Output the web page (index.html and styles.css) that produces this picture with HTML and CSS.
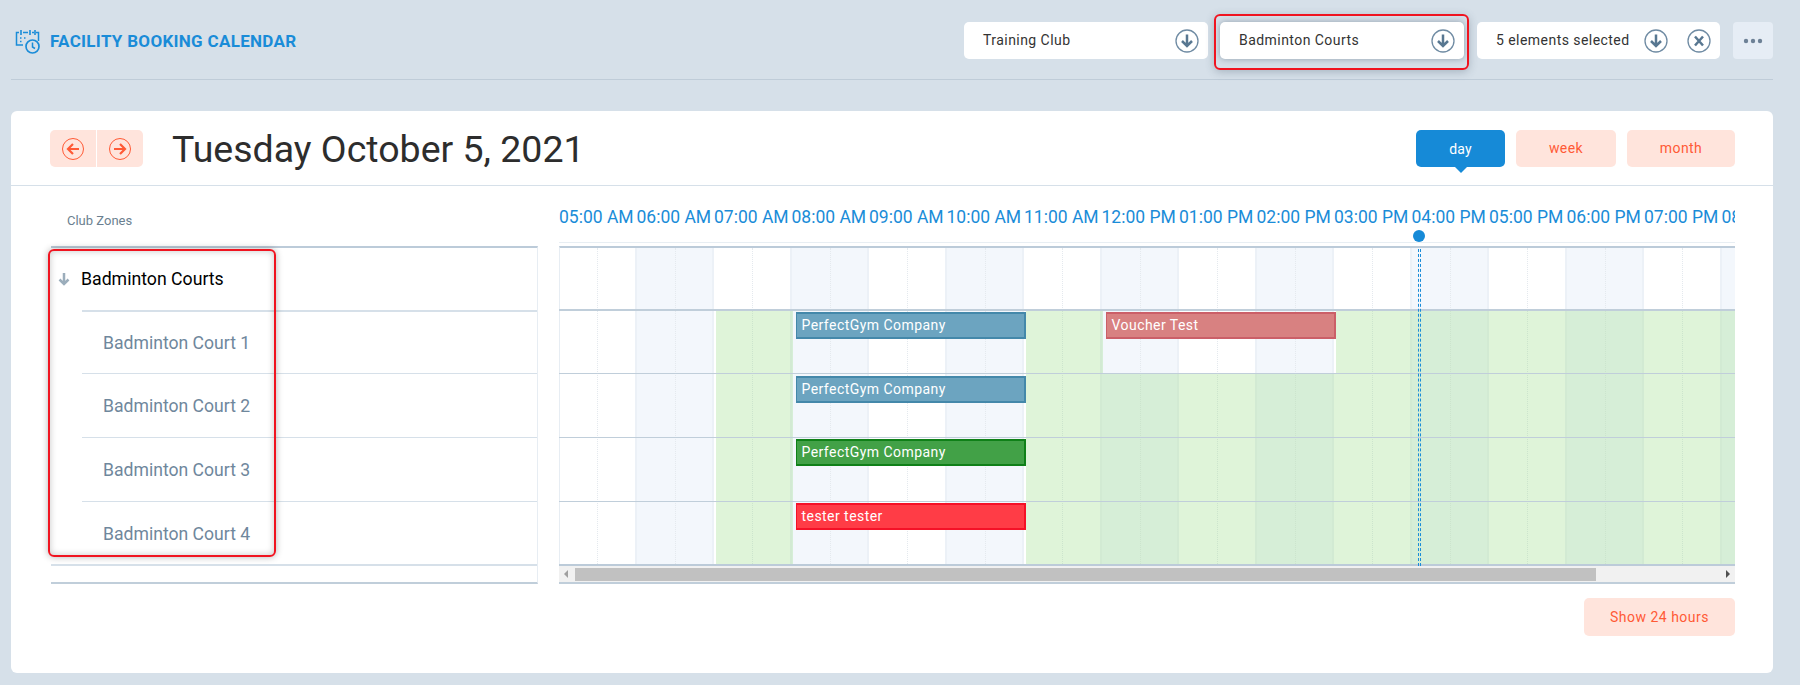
FILE: index.html
```html
<!DOCTYPE html>
<html lang="en">
<head>
    <meta charset="UTF-8">
    <meta name="viewport" content="width=device-width, initial-scale=1.0">
    <title>Facility Booking Calendar</title>
    <link rel="stylesheet" href="styles.css">
</head>
<body>
    <header class="topbar">
        <div class="brand">
            <svg class="brand-icon" width="26" height="26" viewBox="0 0 26 26" fill="none" stroke="#1a8cd8" stroke-width="1.5">
                <path d="M19 3.500h-2M13 3.500H8M4 3.500H1.500V16H8M21 3.500h2.500V12"/>
                <path d="M6 1v5M15 1v5M20 1v5" stroke-width="1.600"/>
                <path d="M5 9h2M9 9h2M5 12.500h2" stroke-dasharray="1.500 1"/>
                <circle cx="17.500" cy="17.500" r="6.500" stroke-width="1.700"/>
                <path d="M17.500 13.500v4.500l2.500 1.500"/>
            </svg>
            <h1 class="brand-name">FACILITY BOOKING CALENDAR</h1>
        </div>
        <div class="filters">
            <div class="select">
                <span class="select-text">Training Club</span>
                <svg class="round-icon" width="24" height="24" viewBox="0 0 24 24" fill="none"><circle cx="12" cy="12" r="11" stroke="#6f8ba3" stroke-width="1.300"/><path d="M12 5.500v11.500M7 12l5 5 5-5" stroke="#587791" stroke-width="2.500"/></svg>
            </div>
            <div class="select select-active">
                <span class="select-text">Badminton Courts</span>
                <svg class="round-icon" width="24" height="24" viewBox="0 0 24 24" fill="none"><circle cx="12" cy="12" r="11" stroke="#6f8ba3" stroke-width="1.300"/><path d="M12 5.500v11.500M7 12l5 5 5-5" stroke="#587791" stroke-width="2.500"/></svg>
                <div class="mark mark-select"></div>
            </div>
            <div class="select select-multi">
                <span class="select-text">5 elements selected</span>
                <svg class="round-icon" width="24" height="24" viewBox="0 0 24 24" fill="none"><circle cx="12" cy="12" r="11" stroke="#6f8ba3" stroke-width="1.300"/><path d="M12 5.500v11.500M7 12l5 5 5-5" stroke="#587791" stroke-width="2.500"/></svg>
                <svg class="round-icon" width="24" height="24" viewBox="0 0 24 24" fill="none"><circle cx="12" cy="12" r="11" stroke="#6f8ba3" stroke-width="1.300"/><path d="M8 7.500l8 9M16 7.500l-8 9" stroke="#587791" stroke-width="2.500"/></svg>
            </div>
            <button class="more">
                <svg width="20" height="6" viewBox="0 0 20 6" fill="#6d8196"><circle cx="3" cy="3" r="2.200"/><circle cx="10" cy="3" r="2.200"/><circle cx="17" cy="3" r="2.200"/></svg>
            </button>
        </div>
    </header>

    <main class="card">
        <div class="card-head">
            <div class="nav">
                <button class="nav-btn">
                    <svg width="24" height="24" viewBox="0 0 24 24" fill="none" stroke="#ff5a36"><circle cx="12" cy="12" r="10.500"/><path d="M18 12H7M12 7l-5 5 5 5" stroke-width="2.200"/></svg>
                </button>
                <button class="nav-btn">
                    <svg width="24" height="24" viewBox="0 0 24 24" fill="none" stroke="#ff5a36"><circle cx="12" cy="12" r="10.500"/><path d="M6 12h11M12 7l5 5-5 5" stroke-width="2.200"/></svg>
                </button>
            </div>
            <h2 class="date">Tuesday October 5, 2021</h2>
            <div class="views">
                <button class="view view-day">day</button>
                <button class="view view-week">week</button>
                <button class="view view-month">month</button>
            </div>
        </div>

        <div class="calendar">
            <div class="zones">
                <div class="zones-title">Club Zones</div>
                <div class="zones-list">
                    <div class="zone-group">
                        <svg width="12" height="14" viewBox="0 0 12 14" fill="none" stroke="#9badbb" stroke-width="2.500"><path d="M6 1v11M1.500 7.500 6 12l4.500-4.500"/></svg>
                        <span>Badminton Courts</span>
                    </div>
                    <div class="zone zone-first">Badminton Court 1</div>
                    <div class="zone">Badminton Court 2</div>
                    <div class="zone">Badminton Court 3</div>
                    <div class="zone">Badminton Court 4</div>
                    <div class="mark mark-zones"></div>
                </div>
            </div>

            <div class="timeline">
                <div class="scroller">
                    <div class="hours">
                        <div class="hour">05:00 AM</div>
                        <div class="hour">06:00 AM</div>
                        <div class="hour">07:00 AM</div>
                        <div class="hour">08:00 AM</div>
                        <div class="hour">09:00 AM</div>
                        <div class="hour">10:00 AM</div>
                        <div class="hour">11:00 AM</div>
                        <div class="hour">12:00 PM</div>
                        <div class="hour">01:00 PM</div>
                        <div class="hour">02:00 PM</div>
                        <div class="hour">03:00 PM</div>
                        <div class="hour">04:00 PM</div>
                        <div class="hour">05:00 PM</div>
                        <div class="hour">06:00 PM</div>
                        <div class="hour">07:00 PM</div>
                        <div class="hour">08:00 PM</div>
                    </div>
                    <div class="grid">
                        <div class="cols">
                            <div class="col"></div><div class="col"></div><div class="col"></div><div class="col"></div>
                            <div class="col"></div><div class="col"></div><div class="col"></div><div class="col"></div>
                            <div class="col"></div><div class="col"></div><div class="col"></div><div class="col"></div>
                            <div class="col"></div><div class="col"></div><div class="col"></div><div class="col"></div>
                        </div>
                        <div class="row row-group"></div>
                        <div class="row row-first">
                            <div class="open from-7 to-8"></div>
                            <div class="open from-11 to-12"></div>
                            <div class="open from-15 to-end"></div>
                            <div class="booking booking-blue from-8 to-11">PerfectGym Company</div>
                            <div class="booking booking-rose from-12 to-15">Voucher Test</div>
                        </div>
                        <div class="row row-second">
                            <div class="open from-7 to-8"></div>
                            <div class="open from-11 to-end"></div>
                            <div class="booking booking-blue from-8 to-11">PerfectGym Company</div>
                        </div>
                        <div class="row">
                            <div class="open from-7 to-8"></div>
                            <div class="open from-11 to-end"></div>
                            <div class="booking booking-green from-8 to-11">PerfectGym Company</div>
                        </div>
                        <div class="row row-last">
                            <div class="open from-7 to-8"></div>
                            <div class="open from-11 to-end"></div>
                            <div class="booking booking-red from-8 to-11">tester tester</div>
                        </div>
                        <div class="now"><div class="now-dot"></div></div>
                    </div>
                </div>
                <div class="scrollbar">
                    <span class="arrow arrow-left"></span>
                    <div class="thumb"></div>
                    <span class="arrow arrow-right"></span>
                </div>
                <div class="foot">
                    <button class="show-all">Show 24 hours</button>
                </div>
            </div>
        </div>
    </main>
</body>
</html>
```

FILE: styles.css
```css
* {
    box-sizing: border-box;
}
html, body {
    height: 100%;
}
body {
    font-family: 'Roboto', 'Liberation Sans', sans-serif;
    background-color: #d6e0e9;
    color: #333;
    margin: 0;
    padding: 0 27px 0 11px;
    overflow: hidden;
}
h1, h2 {
    margin: 0;
    font-weight: normal;
}
button {
    font-family: inherit;
    border: 0;
    cursor: pointer;
    padding: 0;
}

/* top bar */
.topbar {
    display: flex;
    justify-content: space-between;
    height: 80px;
    padding-top: 22px;
    border-bottom: 1px solid #bfccd8;
}
.brand {
    display: flex;
    align-items: flex-start;
    padding-left: 4px;
}
.brand-icon {
    margin-top: 7px;
}
.brand-name {
    font-size: 17px;
    font-weight: 700;
    line-height: 38px;
    letter-spacing: .3px;
    color: #1a8cd8;
    margin-left: 9px;
}
.filters {
    display: flex;
    gap: 13px;
    height: 37px;
}
.select {
    position: relative;
    display: flex;
    align-items: center;
    justify-content: space-between;
    width: 244px;
    padding: 0 9px 0 19px;
    background-color: #fff;
    border-radius: 5px;
}
.select-active {
    box-shadow: 0 0 6px rgba(60, 80, 100, .45);
    margin-left: -1px;
}
.select-multi {
    width: 243px;
    padding-right: 9px;
}
.select-multi .select-text {
    margin-right: auto;
}
.select-multi .round-icon + .round-icon {
    margin-left: 19px;
}
.select-text {
    font-size: 14px;
    letter-spacing: .45px;
    margin-bottom: 2px;
}
.more {
    display: flex;
    align-items: center;
    justify-content: center;
    width: 40px;
    background-color: #e6edf5;
    border-radius: 4px;
}

/* red annotation boxes */
.mark {
    position: absolute;
    border: 2px solid #f01420;
    border-radius: 6px;
    pointer-events: none;
}
.mark-select {
    inset: -8px -5px -11px -6px;
    box-shadow: 0 2px 8px rgba(60, 80, 100, .3);
}
.mark-zones {
    top: 1px;
    left: -3px;
    width: 228px;
    height: 308px;
    box-shadow: 0 0 7px rgba(0, 0, 0, .3), inset 0 0 7px rgba(0, 0, 0, .22);
}

/* card */
.card {
    height: 562px;
    margin-top: 31px;
    background-color: #fff;
    border-radius: 6px;
}
.card-head {
    display: flex;
    align-items: flex-start;
    height: 75px;
    padding: 19px 38px 0 39px;
    border-bottom: 1px solid #d6e0e9;
}
.nav {
    display: flex;
    gap: 1px;
    width: 93px;
    height: 37px;
    border-radius: 5px;
    overflow: hidden;
}
.nav-btn {
    flex: 1;
    display: flex;
    align-items: center;
    justify-content: center;
    background-color: #ffe4dc;
}
.date {
    font-size: 37.500px;
    line-height: 38px;
    color: #2d2d2d;
    margin-left: 29px;
}
.views {
    display: flex;
    gap: 11px;
    margin-left: auto;
}
.view {
    position: relative;
    height: 37px;
    padding-bottom: 2px;
    font-size: 14px;
    letter-spacing: .4px;
    color: #ff5a36;
    background-color: #ffe4dc;
    border-radius: 5px;
}
.view-day {
    width: 89px;
    padding-bottom: 0;
    letter-spacing: .2px;
    color: #fff;
    background-color: #168ad7;
}
.view-day::after {
    content: '';
    position: absolute;
    left: 39px;
    bottom: -6px;
    border-left: 6px solid transparent;
    border-right: 6px solid transparent;
    border-top: 6px solid #168ad7;
}
.view-week {
    width: 100px;
}
.view-month {
    width: 108px;
}

/* calendar body */
.calendar {
    display: flex;
    padding: 0 38px 0 40px;
}
.zones {
    width: 487px;
    flex: none;
}
.zones-title {
    height: 60px;
    padding: 26px 0 0 16px;
    font-size: 13px;
    line-height: 17px;
    color: #6b7f90;
}
.zones-list {
    position: relative;
    height: 338px;
    border-top: 2px solid #bccbd9;
    border-right: 1px solid #e7edf3;
    border-bottom: 2px solid #c0ceda;
}
.zones-list::after {
    content: '';
    position: absolute;
    left: 0;
    right: 0;
    bottom: 16px;
    border-top: 2px solid #d6e0e9;
}
.zone-group {
    display: flex;
    align-items: center;
    height: 62px;
    padding-left: 7px;
    font-size: 17.700px;
    color: #000;
}
.zone-group span {
    margin-left: 11px;
}
.zone {
    display: flex;
    align-items: center;
    height: 64px;
    margin-left: 31px;
    padding-left: 21px;
    font-size: 17.600px;
    color: #6f879c;
    border-top: 1px solid #d6e0e9;
}
.zone-first {
    height: 63px;
    border-top-width: 2px;
}
.timeline {
    flex: 1;
    min-width: 0;
    margin-left: 21px;
}
.scroller {
    overflow: hidden;
}
.hours {
    display: flex;
    width: 1240px;
    height: 57px;
    padding-top: 21px;
    margin-bottom: 3px;
    border-bottom: 1px solid #e8eef3;
}
.hour {
    flex: 0 0 77.500px;
    font-size: 17.500px;
    line-height: 20px;
    color: #1a8cd8;
    white-space: nowrap;
}

/* grid */
.grid {
    position: relative;
    width: 1240px;
    border-top: 2px solid #bccbd9;
    border-left: 1px solid #e7edf3;
}
.cols {
    position: absolute;
    inset: 0;
    display: flex;
    margin-left: -1px;
}
.col {
    position: relative;
    flex: 0 0 77.500px;
    border-right: 2px solid #ecf1f7;
}
.col:nth-child(even) {
    background-color: #f3f7fc;
}
.col::after {
    content: '';
    position: absolute;
    top: 0;
    bottom: 0;
    left: 38px;
    border-left: 1px dotted #e4e9ee;
}
.row {
    position: relative;
    display: grid;
    grid-template-columns: repeat(16, 77.500px);
    height: 64px;
    margin-left: -1px;
    border-bottom: 1px solid #c0ceda;
}
.row-group {
    height: 63px;
    border-bottom-width: 2px;
}
.row-first {
    height: 63px;
}
.row-last {
    border-bottom: 2px solid #bccbd9;
}
.open {
    grid-row: 1;
    margin: 0 -1px 0 2px;
    background-color: rgba(148, 220, 130, .3);
}
.booking {
    grid-row: 1;
    align-self: start;
    height: 27px;
    margin: 1px -2px 0 4px;
    padding-left: 5px;
    font-size: 14px;
    line-height: 23px;
    letter-spacing: .45px;
    color: #fff;
    border: 2px solid;
    border-left-width: 1px;
    z-index: 1;
}
.row-second .booking {
    margin-top: 2px;
}
.from-7 { grid-column-start: 3; }
.from-8 { grid-column-start: 4; }
.from-11 { grid-column-start: 7; }
.from-12 { grid-column-start: 8; }
.from-15 { grid-column-start: 11; }
.to-8 { grid-column-end: 4; }
.to-11 { grid-column-end: 7; }
.to-12 { grid-column-end: 8; }
.to-15 { grid-column-end: 11; }
.to-end { grid-column-end: 17; }
.booking-blue {
    background-color: #6ca4c0;
    border-color: #4488aa;
}
.booking-rose {
    background-color: #d88181;
    border-color: #cb5f68;
}
.booking-green {
    background-color: #42a147;
    border-color: #0f8018;
}
.booking-red {
    background-color: #ff3c46;
    border-color: #f51127;
}
.now {
    position: absolute;
    top: 1px;
    bottom: 0;
    left: 858px;
    width: 3px;
    border-left: 1px dashed #1a8cd8;
    border-right: 1px dashed #1a8cd8;
    z-index: 2;
}
.now-dot {
    position: absolute;
    top: -19px;
    left: -6px;
    width: 12px;
    height: 12px;
    border-radius: 50%;
    background-color: #168ad7;
}

/* scrollbar */
.scrollbar {
    display: flex;
    align-items: center;
    height: 18px;
    background-color: #f1f1f1;
    border-bottom: 2px solid #c0ceda;
    padding: 0 5px;
}
.thumb {
    width: 1021px;
    height: 13px;
    margin-left: 7px;
    background-color: #c1c1c1;
}
.arrow {
    width: 0;
    height: 0;
    border-top: 4px solid transparent;
    border-bottom: 4px solid transparent;
}
.arrow-left {
    border-right: 4px solid #a0a0a0;
}
.arrow-right {
    margin-left: auto;
    border-left: 4px solid #505050;
}
.foot {
    display: flex;
    justify-content: flex-end;
    margin-top: 14px;
}
.show-all {
    width: 151px;
    height: 38px;
    font-size: 14px;
    letter-spacing: .5px;
    color: #ff5a36;
    background-color: #ffe4dc;
    border-radius: 5px;
}
```
